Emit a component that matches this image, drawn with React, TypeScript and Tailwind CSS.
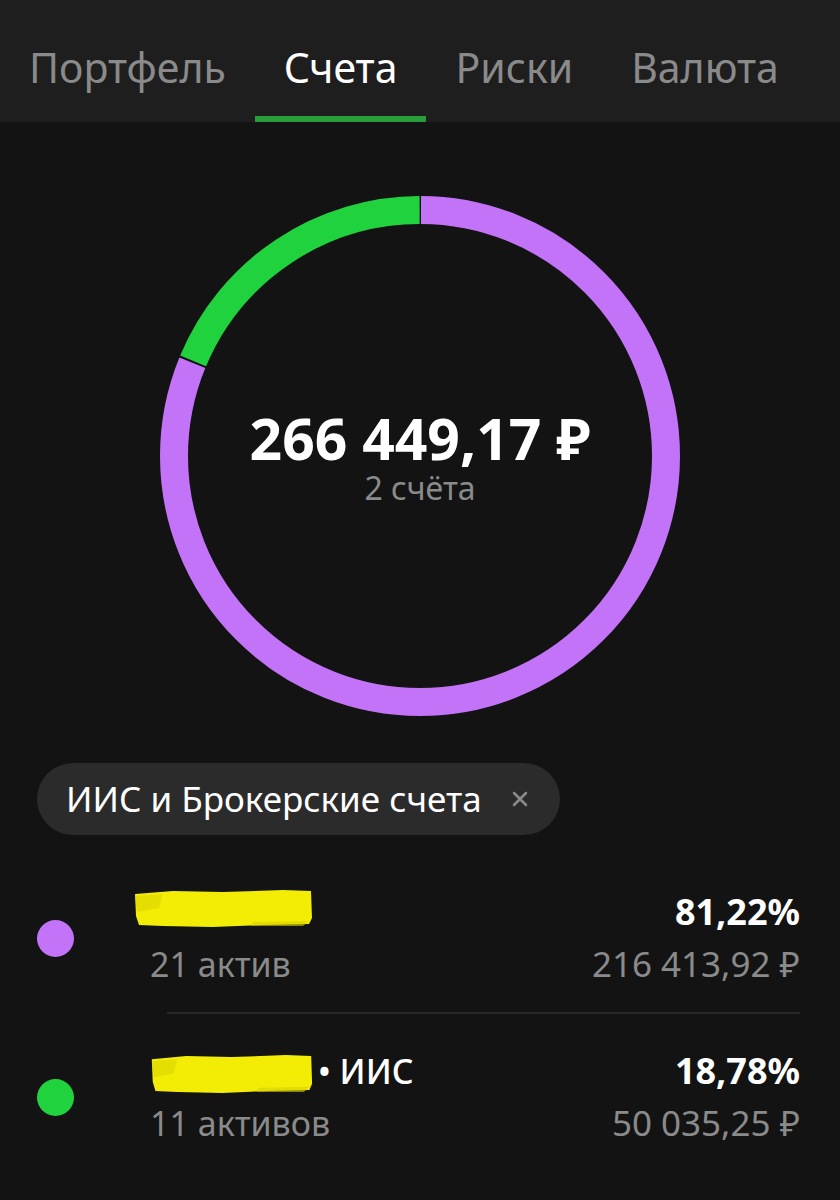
import { X } from "lucide-react";

const TABS = ["Портфель", "Счета", "Риски", "Валюта"];
const ACTIVE = "Счета";

const R = 246;
const C = 2 * Math.PI * R;
const SHARE = 0.8122;
const GAP = 2;

const ACCOUNTS = [
  {
    color: "bg-[#c273f7]",
    mark: { width: 180, height: 40, top: 2, shift: -17 },
    suffix: "",
    assets: "21 актив",
    percent: "81,22%",
    amount: "216 413,92 ₽",
  },
  {
    color: "bg-[#20d23d]",
    mark: { width: 163, height: 41, top: 8, shift: 0 },
    suffix: "• ИИС",
    assets: "11 активов",
    percent: "18,78%",
    amount: "50 035,25 ₽",
  },
];

function Scribble({ width, height }: { width: number; height: number }) {
  // marker pen over the hidden account name
  return (
    <svg width={width} height={height} viewBox="0 0 180 40" preserveAspectRatio="none">
      <path
        d="M2 6 L40 3 L90 4 L150 2 L178 3 L179 30 L176 36 L130 37 L80 39 L30 38 L6 37 L3 28 Z"
        fill="#f3ec05"
      />
      <path d="M2 8 L30 6 L26 20 L4 24 Z" fill="#dcd600" opacity="0.6" />
      <path d="M120 34 L176 33 L170 38 L118 38 Z" fill="#d8d200" opacity="0.6" />
    </svg>
  );
}

export default function App() {
  const purpleLen = C * SHARE - GAP;
  const greenLen = C * (1 - SHARE) - GAP;

  return (
    <div className="min-h-screen w-full bg-[#131313] font-['Noto_Sans',sans-serif] text-white">
      <header className="flex h-[122px] bg-[#1e1e1e]">
        {TABS.map((tab) => (
          <div
            key={tab}
            className={`box-border h-[122px] border-b-[6px] px-[29px] pt-[43px] text-[41px] leading-[48px] ${
              tab === ACTIVE ? "border-[#2a9b3a] text-white" : "border-transparent text-[#8a8a8a]"
            }`}
          >
            {tab}
          </div>
        ))}
      </header>

      <div className="mt-[74px] flex justify-center">
        <div className="grid h-[520px] w-[520px] place-items-center">
          <svg width="520" height="520" viewBox="0 0 520 520" className="[grid-area:1/1]">
            <g transform="rotate(-90 260 260)">
              <circle
                cx="260"
                cy="260"
                r={R}
                fill="none"
                stroke="#c273f7"
                strokeWidth="28"
                strokeDasharray={`${purpleLen} ${C}`}
                strokeDashoffset={-GAP / 2}
              />
              <circle
                cx="260"
                cy="260"
                r={R}
                fill="none"
                stroke="#20d23d"
                strokeWidth="28"
                strokeDasharray={`${greenLen} ${C}`}
                strokeDashoffset={-(C * SHARE + GAP / 2)}
              />
            </g>
          </svg>
          <div className="flex flex-col items-center pt-[2px] [grid-area:1/1]">
            <div className="text-[57px] font-bold leading-[62px]">266 449,17 ₽</div>
            <div className="text-[32px] leading-[38px] text-[#8a8a8a]">2 счёта</div>
          </div>
        </div>
      </div>

      <div className="ml-[37px] mt-[47px] flex h-[72px] w-fit items-center gap-[26px] rounded-full bg-[#2b2b2b] pl-[29px] pr-[28px]">
        <span className="text-[35px] leading-[44px]">ИИС и Брокерские счета</span>
        <X size={24} strokeWidth={2.5} className="text-[#8a8a8a]" />
      </div>

      <div className="mt-[51px] pl-[37px] pr-[40px]">
        {ACCOUNTS.map((acc, i) => (
          <div key={acc.percent}>
            {i > 0 && (
              <div className="mb-[31px] ml-[130px] mt-[22px] h-[2px] bg-[#262626]" />
            )}
            <div className="flex items-center">
              <div className={`h-[37px] w-[37px] shrink-0 rounded-full ${acc.color}`} />
              <div className="ml-[76px] flex-1">
                <div className="flex h-[52px] items-start">
                  <div style={{ marginLeft: acc.mark.shift, marginTop: acc.mark.top }}>
                    <Scribble width={acc.mark.width} height={acc.mark.height} />
                  </div>
                  {acc.suffix && (
                    <span className="ml-[5px] text-[34px] font-medium leading-[52px]">{acc.suffix}</span>
                  )}
                </div>
                <div className="text-[34px] leading-[52px] text-[#8a8a8a]">{acc.assets}</div>
              </div>
              <div className="text-right">
                <div className="text-[36px] font-bold leading-[52px]">{acc.percent}</div>
                <div className="text-[35px] leading-[52px] text-[#8a8a8a]">{acc.amount}</div>
              </div>
            </div>
          </div>
        ))}
      </div>
    </div>
  );
}
